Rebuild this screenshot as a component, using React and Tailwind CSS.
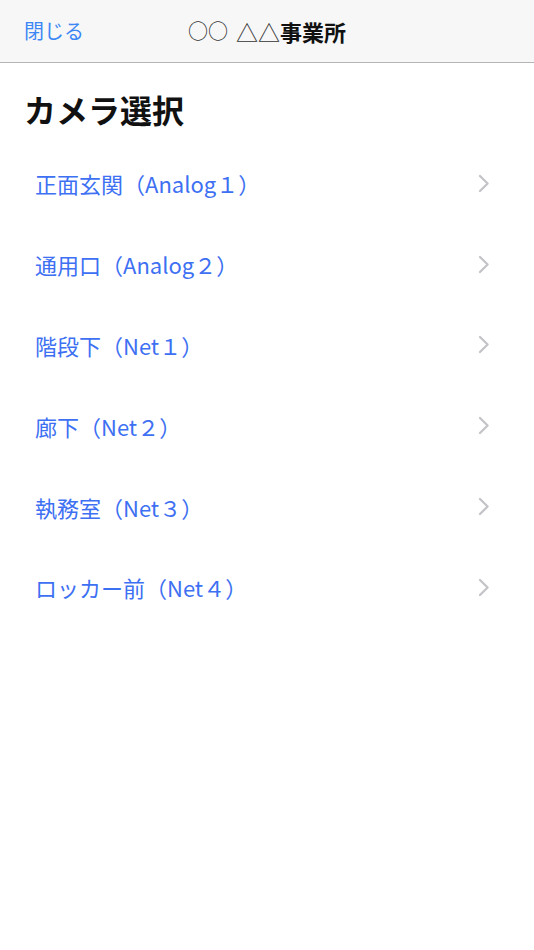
const cameras = [
  "正面玄関（Analog１）",
  "通用口（Analog２）",
  "階段下（Net１）",
  "廊下（Net２）",
  "執務室（Net３）",
  "ロッカー前（Net４）",
];

const font = { fontFamily: '"Noto Sans CJK JP", "Noto Sans", sans-serif' };

function Chevron() {
  return (
    <svg width="12" height="19" viewBox="0 0 12 19" fill="none" className="text-[#c4c4c8]">
      <path d="M2 2 L9.6 9.5 L2 17" stroke="currentColor" strokeWidth="2.3" strokeLinecap="round" strokeLinejoin="round" />
    </svg>
  );
}

export default function App() {
  return (
    <div className="min-h-[950px] w-full bg-white" style={font}>
      <header className="relative flex h-[63px] items-center border-b border-[#b4b4b4] bg-[#f7f7f7]">
        <button className="pl-[24px] text-[20px] leading-none text-[#3d87f5]">閉じる</button>
        <h1 className="absolute left-0 right-0 mx-auto flex w-max items-center text-[22px] font-semibold leading-none text-[#111]">
          <span className="text-[20px] font-normal text-[#333]">○○</span>
          <span className="ml-[8px] font-normal text-[#333]">△△</span>
          <span>事業所</span>
        </h1>
      </header>

      <div className="px-[24px] pt-[26px] pb-[14px]">
        <h2 className="text-[32px] font-bold leading-[40px] text-[#111]">カメラ選択</h2>
      </div>

      <ul>
        {cameras.map((name) => (
          <li key={name} className="flex h-[80.8px] items-center justify-between pl-[35px] pr-[44px]">
            <span className="text-[22px] leading-none text-[#3d70f2]">{name}</span>
            <Chevron />
          </li>
        ))}
      </ul>
    </div>
  );
}
